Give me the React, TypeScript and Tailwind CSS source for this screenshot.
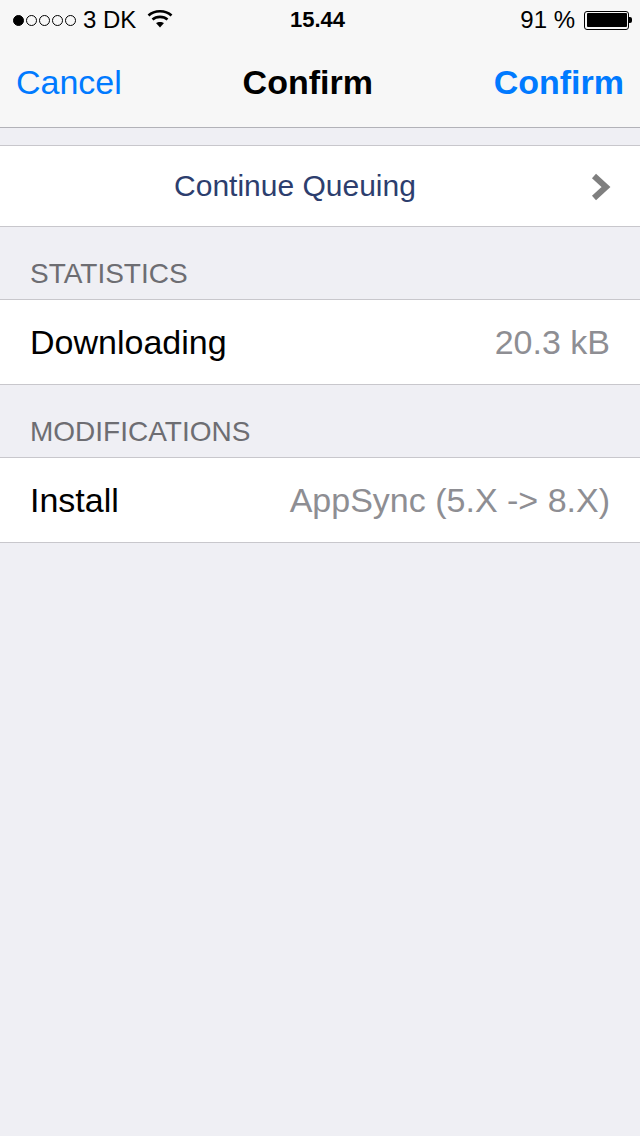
function StatusBar() {
  return (
    <div className="h-10 flex items-center justify-between text-[24px] text-black relative">
      <div className="flex items-center pl-[13px]">
        <div className="flex items-center gap-[2px]">
          <span className="w-[11px] h-[11px] rounded-full bg-black border border-black" />
          <span className="w-[11px] h-[11px] rounded-full border border-black" />
          <span className="w-[11px] h-[11px] rounded-full border border-black" />
          <span className="w-[11px] h-[11px] rounded-full border border-black" />
          <span className="w-[11px] h-[11px] rounded-full border border-black" />
        </div>
        <span className="ml-[7px] leading-none">3 DK</span>
        <svg className="ml-[11px] -mt-[2px]" width="26" height="20" viewBox="0 0 26 20" fill="none" stroke="black" strokeWidth="2.6">
          <path d="M1.5 6.5 C7.5 0.8 18.5 0.8 24.5 6.5" />
          <path d="M5.5 10.5 C9.5 7 16.5 7 20.5 10.5" />
          <path d="M13 18.5 L9 14 C11 12.5 15 12.5 17 14 Z" fill="black" stroke="none" />
        </svg>
      </div>
      <span className="absolute left-[290px] font-bold text-[22px] leading-none">15.44</span>
      <div className="flex items-center pr-[8px]">
        <span className="leading-none">91 %</span>
        <div className="ml-[9px] w-[45px] h-[19px] border border-black rounded-[3px] p-[1.5px] flex">
          <div className="bg-black flex-1 rounded-[1px]" />
        </div>
        <div className="w-[3px] h-[6px] bg-black rounded-r-[2px]" />
      </div>
    </div>
  );
}

function NavBar() {
  return (
    <div className="h-[88px] flex items-center justify-between px-4 pb-[2px] border-b border-[#b2b2b8] text-[34px]">
      <span className="text-[#007aff]">Cancel</span>
      <span className="font-bold text-black">Confirm</span>
      <span className="font-bold text-[#007aff]">Confirm</span>
    </div>
  );
}

function Row({ label, value }: { label: string; value: string }) {
  return (
    <div className="h-[86px] bg-white border-y border-[#c8c7cc] flex items-center justify-between pl-[30px] pr-[30px]">
      <span className="text-[34px] text-black">{label}</span>
      <span className="text-[34px] text-[#8e8e93]">{value}</span>
    </div>
  );
}

function SectionHeader({ children }: { children: string }) {
  return (
    <div className="h-[72px] flex items-end pl-[30px] pb-[11px] text-[28px] leading-none text-[#6d6d72]">
      {children}
    </div>
  );
}

export default function App() {
  return (
    <div className="w-[640px] h-[1136px] bg-[#efeff4] font-['Liberation_Sans',sans-serif] overflow-hidden">
      <div className="bg-[#f7f7f7]">
        <StatusBar />
        <NavBar />
      </div>
      <div className="mt-[17px] h-[82px] bg-white border-y border-[#c8c7cc] flex items-center relative">
        <span className="w-full text-center text-[30px] text-[#2d3e6e] pr-[50px] pb-[2px]">Continue Queuing</span>
        <svg className="absolute right-[29px] top-[27px]" width="20" height="28" viewBox="0 0 20 28" fill="none" stroke="#7f7f7f" strokeWidth="6">
          <path d="M3 3 L15 14 L3 25" />
        </svg>
      </div>
      <SectionHeader>STATISTICS</SectionHeader>
      <Row label="Downloading" value="20.3 kB" />
      <SectionHeader>MODIFICATIONS</SectionHeader>
      <Row label="Install" value="AppSync (5.X -> 8.X)" />
    </div>
  );
}
